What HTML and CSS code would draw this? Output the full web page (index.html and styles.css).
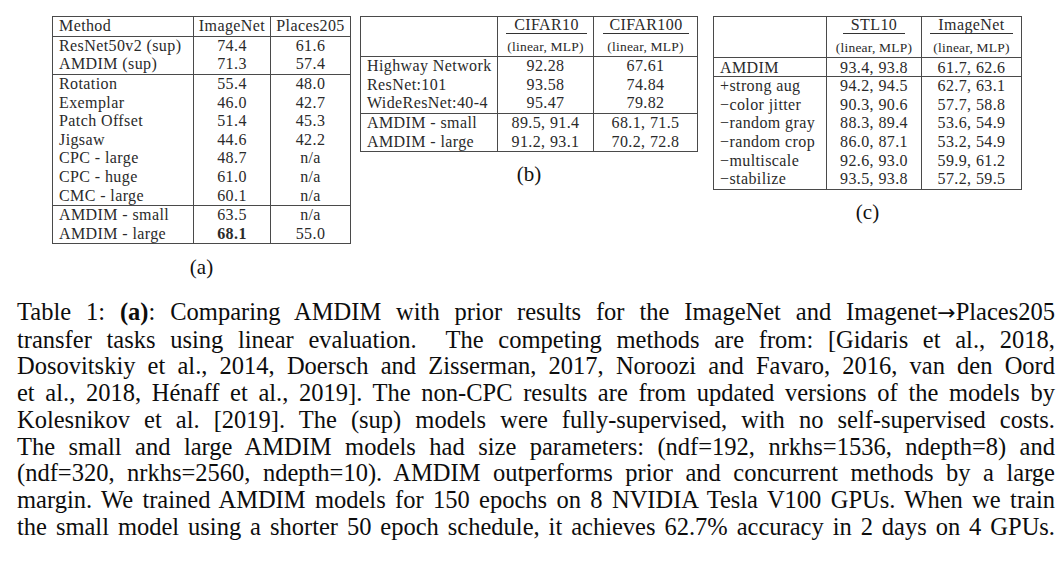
FILE: index.html
```html
<!DOCTYPE html>
<html>
<head>
<meta charset="utf-8">
<link rel="stylesheet" href="styles.css">
</head>
<body>
<div class="page">
  <div class="figures">
    <div class="fig fig-a">
      <table class="tbl tbl-a">
        <colgroup><col class="a1"><col class="a2"><col class="a3"></colgroup>
        <tr class="hdr"><td class="l">Method</td><td>ImageNet</td><td>Places205</td></tr>
        <tr class="sep"><td class="l">ResNet50v2 (sup)</td><td>74.4</td><td>61.6</td></tr>
        <tr><td class="l">AMDIM (sup)</td><td>71.3</td><td>57.4</td></tr>
        <tr class="sep"><td class="l">Rotation</td><td>55.4</td><td>48.0</td></tr>
        <tr><td class="l">Exemplar</td><td>46.0</td><td>42.7</td></tr>
        <tr><td class="l">Patch Offset</td><td>51.4</td><td>45.3</td></tr>
        <tr><td class="l">Jigsaw</td><td>44.6</td><td>42.2</td></tr>
        <tr><td class="l">CPC - large</td><td>48.7</td><td>n/a</td></tr>
        <tr><td class="l">CPC - huge</td><td>61.0</td><td>n/a</td></tr>
        <tr><td class="l">CMC - large</td><td>60.1</td><td>n/a</td></tr>
        <tr class="sep"><td class="l">AMDIM - small</td><td>63.5</td><td>n/a</td></tr>
        <tr><td class="l">AMDIM - large</td><td><b>68.1</b></td><td>55.0</td></tr>
      </table>
      <div class="sub">(a)</div>
    </div>
    <div class="fig fig-b">
      <table class="tbl tbl-b">
        <colgroup><col class="b1"><col class="b2"><col class="b3"></colgroup>
        <tr class="h1"><td class="l"></td><td><span class="rule r-c10">CIFAR10</span></td><td><span class="rule r-c100">CIFAR100</span></td></tr>
        <tr class="h2"><td class="l"></td><td>(linear, MLP)</td><td>(linear, MLP)</td></tr>
        <tr class="sep"><td class="l">Highway Network</td><td>92.28</td><td>67.61</td></tr>
        <tr><td class="l">ResNet:101</td><td>93.58</td><td>74.84</td></tr>
        <tr><td class="l">WideResNet:40-4</td><td>95.47</td><td>79.82</td></tr>
        <tr class="sep"><td class="l">AMDIM - small</td><td>89.5, 91.4</td><td>68.1, 71.5</td></tr>
        <tr><td class="l">AMDIM - large</td><td>91.2, 93.1</td><td>70.2, 72.8</td></tr>
      </table>
      <div class="sub sub-b">(b)</div>
    </div>
    <div class="fig fig-c">
      <table class="tbl tbl-c">
        <colgroup><col class="c1"><col class="c2"><col class="c3"></colgroup>
        <tr class="h1"><td class="l"></td><td><span class="rule r-stl">STL10</span></td><td><span class="rule r-in">ImageNet</span></td></tr>
        <tr class="h2"><td class="l"></td><td>(linear, MLP)</td><td>(linear, MLP)</td></tr>
        <tr class="sep amd"><td class="l">AMDIM</td><td>93.4, 93.8</td><td>61.7, 62.6</td></tr>
        <tr class="sep"><td class="l">+strong aug</td><td>94.2, 94.5</td><td>62.7, 63.1</td></tr>
        <tr><td class="l">&minus;color jitter</td><td>90.3, 90.6</td><td>57.7, 58.8</td></tr>
        <tr><td class="l">&minus;random gray</td><td>88.3, 89.4</td><td>53.6, 54.9</td></tr>
        <tr><td class="l">&minus;random crop</td><td>86.0, 87.1</td><td>53.2, 54.9</td></tr>
        <tr><td class="l">&minus;multiscale</td><td>92.6, 93.0</td><td>59.9, 61.2</td></tr>
        <tr><td class="l">&minus;stabilize</td><td>93.5, 93.8</td><td>57.2, 59.5</td></tr>
      </table>
      <div class="sub sub-c">(c)</div>
    </div>
  </div>
  <p class="caption">
    <span class="ln">Table 1: <b>(a)</b>: Comparing AMDIM with prior results for the ImageNet and Imagenet<span class="arr">&rarr;</span>Places205</span>
    <span class="ln">transfer tasks using linear evaluation.&nbsp; The competing methods are from: [Gidaris et al., 2018,</span>
    <span class="ln">Dosovitskiy et al., 2014, Doersch and Zisserman, 2017, Noroozi and Favaro, 2016, van den Oord</span>
    <span class="ln">et al., 2018, H&eacute;naff et al., 2019]. The non-CPC results are from updated versions of the models by</span>
    <span class="ln">Kolesnikov et al. [2019]. The (sup) models were fully-supervised, with no self-supervised costs.</span>
    <span class="ln">The small and large AMDIM models had size parameters: (ndf=192, nrkhs=1536, ndepth=8) and</span>
    <span class="ln">(ndf=320, nrkhs=2560, ndepth=10). AMDIM outperforms prior and concurrent methods by a large</span>
    <span class="ln">margin. We trained AMDIM models for 150 epochs on 8 NVIDIA Tesla V100 GPUs. When we train</span>
    <span class="ln">the small model using a shorter 50 epoch schedule, it achieves 62.7% accuracy in 2 days on 4 GPUs.</span>
  </p>
</div>
</body>
</html>
```
FILE: styles.css
```css
html, body {
  margin: 0;
  padding: 0;
  background: #ffffff;
}
.page {
  width: 1064px;
  height: 566px;
  overflow: hidden;
  color: #111;
  font-family: "Liberation Serif", "Times New Roman", serif;
}
.figures {
  display: flex;
  align-items: flex-start;
  padding-top: 16px;
  padding-left: 52px;
  height: 299px;
  box-sizing: border-box;
}
.fig {
  display: flex;
  flex-direction: column;
  align-items: center;
}
.fig-b { margin-left: 9px; }
.fig-c { margin-left: 15px; }
.tbl {
  border-collapse: collapse;
  table-layout: fixed;
  font-family: "Liberation Serif", "Times New Roman", serif;
  font-size: 16px;
  letter-spacing: 0.4px;
  color: #2a2a2a;
  border: 1px solid #4a4a4a;
}
.tbl td {
  height: 18.6px;
  padding: 0;
  line-height: 18px;
  text-align: center;
  white-space: nowrap;
  border-left: 1px solid #4a4a4a;
  border-right: 1px solid #4a4a4a;
}
.tbl td.l {
  text-align: left;
  padding-left: 6px;
}
.tbl tr.sep td {
  border-top: 1px solid #4a4a4a;
}
.tbl-a .a1 { width: 141px; }
.tbl-a .a2 { width: 77px; }
.tbl-a .a3 { width: 80px; }
.tbl-b .b1 { width: 137px; }
.tbl-b .b2 { width: 96px; }
.tbl-b .b3 { width: 104px; }
.tbl-c .c1 { width: 113px; }
.tbl-c .c2 { width: 95px; }
.tbl-c .c3 { width: 100px; }
.tbl tr.h1 td {
  height: 20px;
  vertical-align: top;
}
.tbl tr.h2 td {
  height: 19px;
  line-height: 19px;
  font-size: 13.5px;
  letter-spacing: 0.2px;
  vertical-align: middle;
}
.tbl-c tr.h2 td { height: 20px; }
.rule {
  display: block;
  border-bottom: 1px solid #333;
  line-height: 16px;
}
.r-c10 { margin: 0 6px 0 8px; }
.r-c100 { margin: 0 8px 0 9px; }
.r-stl { margin: 0 16px 0 16px; }
.r-in { margin: 0 8px 0 8px; }
.tbl-c tr.amd td { height: 18px; line-height: 17px; }
.sub {
  font-family: "Liberation Serif", "Times New Roman", serif;
  font-size: 21px;
  line-height: 22px;
  margin-top: 12px;
  color: #111;
}
.sub-b { margin-top: 11px; }
.sub-c { margin-top: 11px; }
.caption {
  margin: 0;
  padding: 0 9px 0 17px;
  font-family: "Liberation Serif", "Times New Roman", serif;
  font-size: 24.5px;
  line-height: 26.7px;
  color: #0d0d0d;
}
.caption .ln {
  display: block;
  white-space: nowrap;
  text-align: justify;
  text-align-last: justify;
}
.caption .arr {
  font-family: "DejaVu Sans", sans-serif;
  font-size: 22px;
}
```
